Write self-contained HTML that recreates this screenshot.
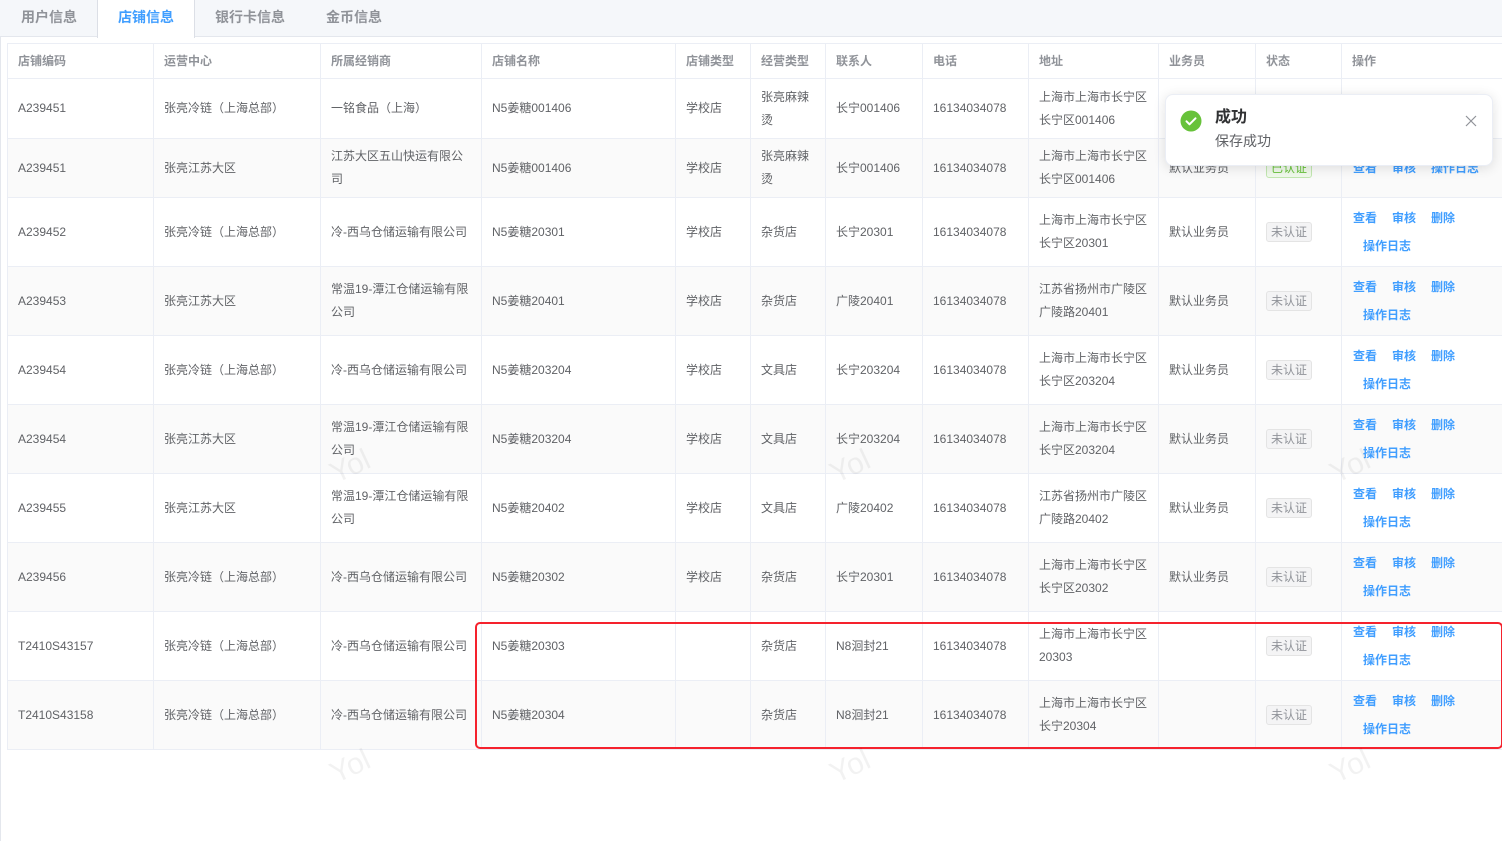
<!DOCTYPE html>
<html><head><meta charset="utf-8"><style>
*{margin:0;padding:0;box-sizing:border-box}
body{width:1502px;height:841px;background:#fff;font-family:"Liberation Sans","Noto Sans CJK SC",sans-serif;position:relative;overflow:hidden;color:#606266}
.tabs{position:absolute;left:0;top:0;width:1502px;height:37px;background:#f5f7fa;border-bottom:1px solid #e4e7ed}
.tab{position:absolute;top:0;height:37px;line-height:35px;font-size:14px;font-weight:bold;color:#909399}
.tab.act{background:#fff;color:#409eff;border-left:1px solid #dcdfe6;border-right:1px solid #dcdfe6;height:38px}
.lb{position:absolute;left:0;top:37px;width:1px;height:804px;background:#e4e7ed}
table{position:absolute;left:7px;top:43px;width:1495px;border-collapse:collapse;table-layout:fixed;font-size:12px}
td,th{border:1px solid #ebeef5;padding:0 10px;vertical-align:middle;text-align:left;line-height:23px}
th{height:35px;font-weight:bold;color:#909399}
tr.s td{background:#fafafa}
.tag{display:inline-block;height:20px;line-height:18px;padding:0 4px;border:1px solid #e4e4e4;background:#f4f4f5;color:#909399;border-radius:3px;font-size:12px}
.tag.g{background:#f0f9eb;border-color:#c2e7b0;color:#67c23a}
td.op{color:#409eff;font-weight:bold;line-height:28px;white-space:nowrap;padding-left:11px;overflow:hidden}
.op span{margin-right:15px}
.red{position:absolute;left:475px;top:622px;width:1028px;height:127px;border:2px solid #f5222d;border-radius:5px}
.toast{position:absolute;left:1165px;top:94px;width:328px;height:72px;background:#fff;border-radius:8px;box-shadow:0 2px 12px rgba(0,0,0,.12);border:1px solid #ebeef5}
.wm{position:absolute;color:rgba(0,0,0,.05);font-size:30px;transform:rotate(-25deg)}
</style></head><body>
<div class="tabs">
<div class="tab" style="left:21px">用户信息</div>
<div class="tab act" style="left:97px;width:98px;padding-left:20px">店铺信息</div>
<div class="tab" style="left:215px">银行卡信息</div>
<div class="tab" style="left:326px">金币信息</div>
</div>
<div class="lb"></div>
<table>
<colgroup><col style="width:146px"><col style="width:167px"><col style="width:161px"><col style="width:194px"><col style="width:75px"><col style="width:75px"><col style="width:97px"><col style="width:106px"><col style="width:130px"><col style="width:97px"><col style="width:86px"><col style="width:161px"></colgroup>
<tr><th>店铺编码</th><th>运营中心</th><th>所属经销商</th><th>店铺名称</th><th>店铺类型</th><th>经营类型</th><th>联系人</th><th>电话</th><th>地址</th><th>业务员</th><th>状态</th><th>操作</th></tr>
<tr style="height:60px"><td>A239451</td><td>张亮冷链（上海总部）</td><td>一铭食品（上海）</td><td>N5姜糖001406</td><td>学校店</td><td>张亮麻辣烫</td><td>长宁001406</td><td>16134034078</td><td>上海市上海市长宁区长宁区001406</td><td>默认业务员</td><td><span class="tag g">已认证</span></td><td class="op"><span>查看</span><span>审核</span><span>操作日志</span></td></tr>
<tr class="s" style="height:59px"><td>A239451</td><td>张亮江苏大区</td><td>江苏大区五山快运有限公司</td><td>N5姜糖001406</td><td>学校店</td><td>张亮麻辣烫</td><td>长宁001406</td><td>16134034078</td><td>上海市上海市长宁区长宁区001406</td><td>默认业务员</td><td><span class="tag g">已认证</span></td><td class="op"><span>查看</span><span>审核</span><span>操作日志</span></td></tr>
<tr style="height:69px"><td>A239452</td><td>张亮冷链（上海总部）</td><td>冷-西乌仓储运输有限公司</td><td>N5姜糖20301</td><td>学校店</td><td>杂货店</td><td>长宁20301</td><td>16134034078</td><td>上海市上海市长宁区长宁区20301</td><td>默认业务员</td><td><span class="tag">未认证</span></td><td class="op"><span>查看</span><span>审核</span><span>删除</span><br>&nbsp;&nbsp;&nbsp;操作日志</td></tr>
<tr class="s" style="height:69px"><td>A239453</td><td>张亮江苏大区</td><td>常温19-潭江仓储运输有限公司</td><td>N5姜糖20401</td><td>学校店</td><td>杂货店</td><td>广陵20401</td><td>16134034078</td><td>江苏省扬州市广陵区广陵路20401</td><td>默认业务员</td><td><span class="tag">未认证</span></td><td class="op"><span>查看</span><span>审核</span><span>删除</span><br>&nbsp;&nbsp;&nbsp;操作日志</td></tr>
<tr style="height:69px"><td>A239454</td><td>张亮冷链（上海总部）</td><td>冷-西乌仓储运输有限公司</td><td>N5姜糖203204</td><td>学校店</td><td>文具店</td><td>长宁203204</td><td>16134034078</td><td>上海市上海市长宁区长宁区203204</td><td>默认业务员</td><td><span class="tag">未认证</span></td><td class="op"><span>查看</span><span>审核</span><span>删除</span><br>&nbsp;&nbsp;&nbsp;操作日志</td></tr>
<tr class="s" style="height:69px"><td>A239454</td><td>张亮江苏大区</td><td>常温19-潭江仓储运输有限公司</td><td>N5姜糖203204</td><td>学校店</td><td>文具店</td><td>长宁203204</td><td>16134034078</td><td>上海市上海市长宁区长宁区203204</td><td>默认业务员</td><td><span class="tag">未认证</span></td><td class="op"><span>查看</span><span>审核</span><span>删除</span><br>&nbsp;&nbsp;&nbsp;操作日志</td></tr>
<tr style="height:69px"><td>A239455</td><td>张亮江苏大区</td><td>常温19-潭江仓储运输有限公司</td><td>N5姜糖20402</td><td>学校店</td><td>文具店</td><td>广陵20402</td><td>16134034078</td><td>江苏省扬州市广陵区广陵路20402</td><td>默认业务员</td><td><span class="tag">未认证</span></td><td class="op"><span>查看</span><span>审核</span><span>删除</span><br>&nbsp;&nbsp;&nbsp;操作日志</td></tr>
<tr class="s" style="height:69px"><td>A239456</td><td>张亮冷链（上海总部）</td><td>冷-西乌仓储运输有限公司</td><td>N5姜糖20302</td><td>学校店</td><td>杂货店</td><td>长宁20301</td><td>16134034078</td><td>上海市上海市长宁区长宁区20302</td><td>默认业务员</td><td><span class="tag">未认证</span></td><td class="op"><span>查看</span><span>审核</span><span>删除</span><br>&nbsp;&nbsp;&nbsp;操作日志</td></tr>
<tr style="height:69px"><td>T2410S43157</td><td>张亮冷链（上海总部）</td><td>冷-西乌仓储运输有限公司</td><td>N5姜糖20303</td><td></td><td>杂货店</td><td>N8洄封21</td><td>16134034078</td><td>上海市上海市长宁区20303</td><td></td><td><span class="tag">未认证</span></td><td class="op"><span>查看</span><span>审核</span><span>删除</span><br>&nbsp;&nbsp;&nbsp;操作日志</td></tr>
<tr class="s" style="height:69px"><td>T2410S43158</td><td>张亮冷链（上海总部）</td><td>冷-西乌仓储运输有限公司</td><td>N5姜糖20304</td><td></td><td>杂货店</td><td>N8洄封21</td><td>16134034078</td><td>上海市上海市长宁区长宁20304</td><td></td><td><span class="tag">未认证</span></td><td class="op"><span>查看</span><span>审核</span><span>删除</span><br>&nbsp;&nbsp;&nbsp;操作日志</td></tr>
</table>
<div class="red"></div>
<div class="wm" style="left:330px;top:750px">Yol</div>
<div class="wm" style="left:830px;top:750px">Yol</div>
<div class="wm" style="left:1330px;top:750px">Yol</div>
<div class="wm" style="left:330px;top:450px">Yol</div>
<div class="wm" style="left:830px;top:450px">Yol</div>
<div class="wm" style="left:1330px;top:450px">Yol</div>
<div class="toast">
<svg style="position:absolute;left:14px;top:15px" width="22" height="22" viewBox="0 0 22 22"><circle cx="11" cy="11" r="10.5" fill="#67c23a"/><path d="M6.5 11.3l3 3 6-6" stroke="#fff" stroke-width="2" fill="none" stroke-linecap="round" stroke-linejoin="round"/></svg>
<div style="position:absolute;left:49px;top:8px;font-size:16px;font-weight:bold;color:#303133">成功</div>
<div style="position:absolute;left:49px;top:36px;font-size:14px;color:#606266">保存成功</div>
<svg style="position:absolute;left:299px;top:20px" width="12" height="12" viewBox="0 0 12 12"><path d="M1 1l10 10M11 1L1 11" stroke="#909399" stroke-width="1.2"/></svg>
</div>
</body></html>
